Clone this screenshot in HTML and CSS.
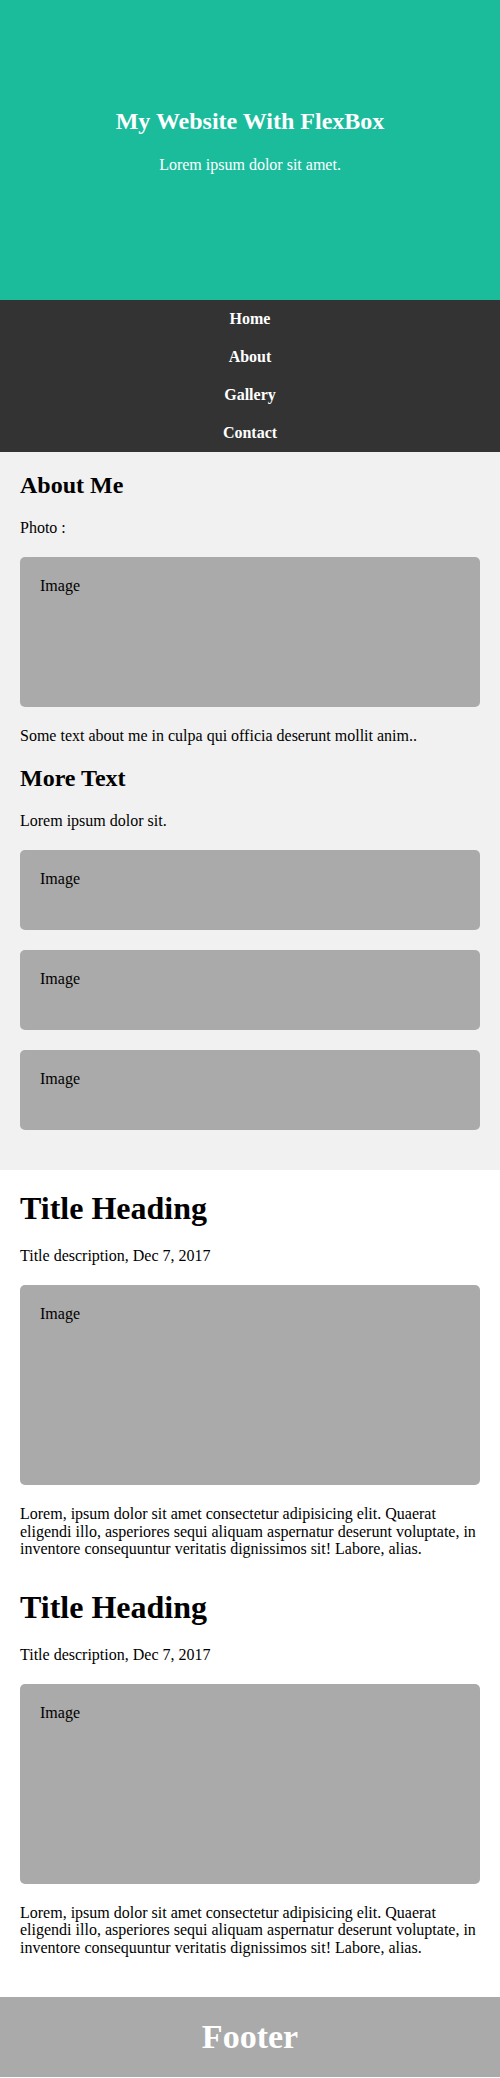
FILE: index.html
```html
<!DOCTYPE html>
<html lang="en">
<head>
<meta charset="utf-8">
<title>My Website With FlexBox</title>
<link rel="stylesheet" href="styles.css">
</head>
<body>
  <header class="header">
    <h1 class="header-title">My Website With FlexBox</h1>
    <p class="header-text">Lorem ipsum dolor sit amet.</p>
  </header>

  <nav class="navbar">
    <a class="nav-link" href="#">Home</a>
    <a class="nav-link" href="#">About</a>
    <a class="nav-link" href="#">Gallery</a>
    <a class="nav-link" href="#">Contact</a>
  </nav>

  <div class="row">
    <aside class="side">
      <h2 class="side-title">About Me</h2>
      <p>Photo :</p>
      <div class="fakeimg fakeimg-lg">Image</div>
      <p>Some text about me in culpa qui officia deserunt mollit anim..</p>
      <h2 class="side-title">More Text</h2>
      <p>Lorem ipsum dolor sit.</p>
      <div class="fakeimg fakeimg-sm">Image</div>
      <div class="fakeimg fakeimg-sm">Image</div>
      <div class="fakeimg fakeimg-sm">Image</div>
    </aside>

    <main class="main">
      <article class="post">
        <h1 class="post-title">Title Heading</h1>
        <p>Title description, Dec 7, 2017</p>
        <div class="fakeimg fakeimg-xl">Image</div>
        <p>Lorem, ipsum dolor sit amet consectetur adipisicing elit. Quaerat eligendi illo, asperiores sequi aliquam aspernatur deserunt voluptate, in inventore consequuntur veritatis dignissimos sit! Labore, alias.</p>
      </article>
      <article class="post">
        <h1 class="post-title">Title Heading</h1>
        <p>Title description, Dec 7, 2017</p>
        <div class="fakeimg fakeimg-xl">Image</div>
        <p>Lorem, ipsum dolor sit amet consectetur adipisicing elit. Quaerat eligendi illo, asperiores sequi aliquam aspernatur deserunt voluptate, in inventore consequuntur veritatis dignissimos sit! Labore, alias.</p>
      </article>
    </main>
  </div>

  <footer class="footer">
    <h1 class="footer-title">Footer</h1>
  </footer>
</body>
</html>
```

FILE: styles.css
```css
* {
  box-sizing: border-box;
}

html,
body {
  margin: 0;
  padding: 0;
}

body {
  font-family: "Liberation Serif", "Times New Roman", serif;
  font-size: 16px;
  line-height: 1.107;
  color: #000;
  background: #fff;
}

p {
  margin: 16px 0;
}

/* Header */
.header {
  height: 300px;
  padding: 88px 20px 0;
  background: #1abc9c;
  color: #fff;
  text-align: center;
}

.header-title {
  font-size: 24px;
  font-weight: bold;
  margin: 20px 0;
}

.header-text {
  margin: 21px 0 0;
}

/* Navbar */
.navbar {
  display: flex;
  flex-direction: column;
  background: #333;
}

.nav-link {
  display: block;
  padding: 10px 20px;
  line-height: 18px;
  color: #fff;
  font-weight: bold;
  text-align: center;
  text-decoration: none;
}

/* Layout */
.row {
  display: flex;
  flex-direction: column;
}

.side {
  display: flow-root;
  background: #f1f1f1;
  padding: 0 20px 20px;
}

.side-title {
  font-size: 24px;
  line-height: 27.5px;
  margin: 19.92px 0;
}

.main {
  display: flow-root;
  background: #fff;
  padding: 0 20px 8px;
}

.post {
  margin-bottom: 32px;
}

.post-title {
  font-size: 32px;
  margin: 21.44px 0 20.5px;
}

/* Fake images */
.fakeimg {
  background: #aaa;
  border-radius: 5px;
  padding: 20px;
  margin: 20px 0;
  width: 100%;
}

.fakeimg-lg {
  height: 150px;
}

.fakeimg-sm {
  height: 80px;
}

.fakeimg-xl {
  height: 200px;
}

/* Footer */
.footer {
  background: #aaa;
  padding: 22px 20px;
  text-align: center;
}

.footer-title {
  margin: 0;
  font-size: 34px;
  line-height: 36px;
  color: #fff;
}
```
